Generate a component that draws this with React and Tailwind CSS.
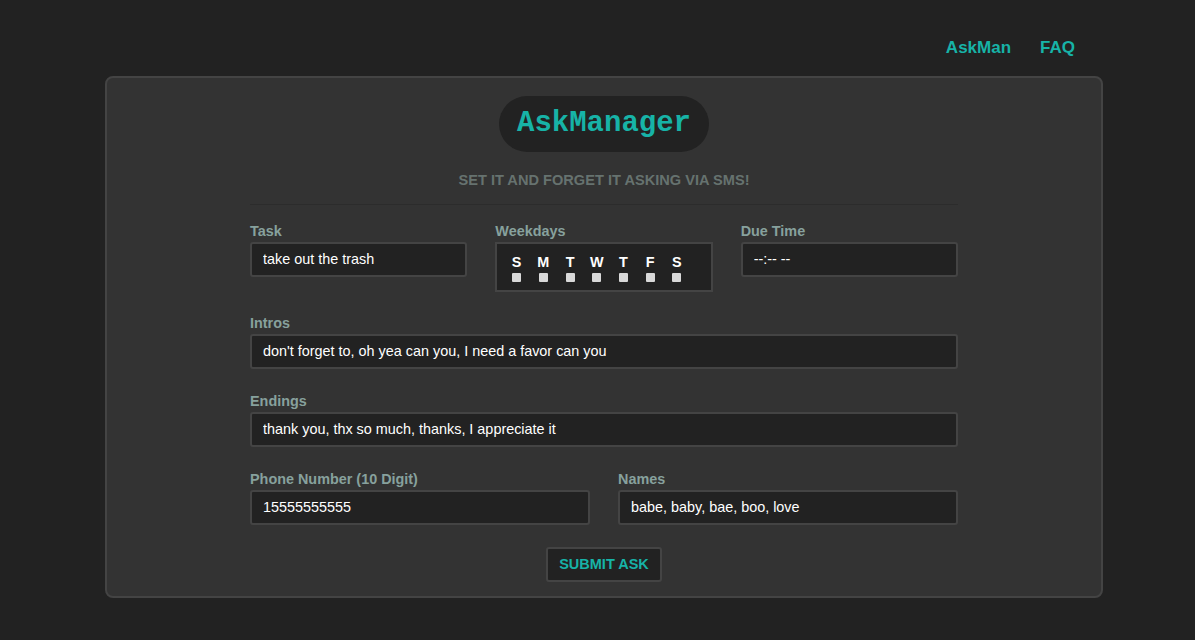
import React from 'react';

const teal = 'text-[#17b3a7]';

const Label = ({ children }) => (
  <label className="block text-[14.4px] leading-[16px] font-bold text-[#87a19d] mb-[3px]">{children}</label>
);

const Field = ({ value }) => (
  <input
    readOnly
    value={value}
    className="block w-full h-[35px] px-[11px] pb-[2px] bg-[#222222] border-2 border-[#444444] rounded-[3px] text-white text-[14.4px] outline-none"
  />
);

const days = ['S', 'M', 'T', 'W', 'T', 'F', 'S'];

const App = () => {
  return (
    <div className="min-h-[640px] bg-[#222222] font-['Liberation_Sans',Arial,sans-serif] pb-[40px]">
      {/* Nav */}
      <div className="flex justify-end gap-[29px] pr-[120px] pt-[38px] h-[76px]">
        <a className={`text-[17px] leading-[20px] font-bold ${teal}`}>AskMan</a>
        <a className={`text-[17px] leading-[20px] font-bold ${teal}`}>FAQ</a>
      </div>

      {/* Card */}
      <div className="ml-[105px] w-[998px] h-[522px] bg-[#333333] border-2 border-[#444444] rounded-[8px] pt-[18px]">
        <div className="flex justify-center">
          <div className="w-[210px] h-[56px] rounded-full bg-[#222222] flex items-center justify-center">
            <span className={`font-['Liberation_Mono','Courier_New',monospace] font-bold text-[29px] ${teal}`}>AskManager</span>
          </div>
        </div>
        <p className="mt-[20px] text-center text-[14.6px] leading-[17px] font-bold text-[#66726f]">SET IT AND FORGET IT ASKING VIA SMS!</p>

        <div className="mx-[143px] mt-[15px] border-t border-[#2c2c2c]" />

        <div className="mx-[143px] mt-[18px]">
          {/* Row 1 */}
          <div className="grid grid-cols-3 gap-[28px]">
            <div>
              <Label>Task</Label>
              <Field value="take out the trash" />
            </div>
            <div>
              <Label>Weekdays</Label>
              <div className="h-[50px] bg-[#222222] border-2 border-[#444444] flex pl-[6px] pt-[10px]">
                {days.map((d, i) => (
                  <div key={i} className="w-[26.7px] flex flex-col items-center">
                    <span className="text-white font-bold text-[14.4px] leading-[16px]">{d}</span>
                    <span className="mt-[3px] w-[9px] h-[9px] rounded-[1px] bg-[#d9d9d9]" />
                  </div>
                ))}
              </div>
            </div>
            <div>
              <Label>Due Time</Label>
              <Field value="--:-- --" />
            </div>
          </div>

          <div className="mt-[23px]">
            <Label>Intros</Label>
            <Field value="don't forget to, oh yea can you, I need a favor can you" />
          </div>

          <div className="mt-[24px]">
            <Label>Endings</Label>
            <Field value="thank you, thx so much, thanks, I appreciate it" />
          </div>

          <div className="mt-[24px] grid grid-cols-2 gap-[28px]">
            <div>
              <Label>Phone Number (10 Digit)</Label>
              <Field value="15555555555" />
            </div>
            <div>
              <Label>Names</Label>
              <Field value="babe, baby, bae, boo, love" />
            </div>
          </div>

          <div className="flex justify-center mt-[22px]">
            <button className={`h-[35px] px-[11px] bg-[#222222] border-2 border-[#444444] rounded-[3px] text-[14.5px] font-bold ${teal}`}>
              SUBMIT ASK
            </button>
          </div>
        </div>
      </div>
    </div>
  );
};

export default App;
